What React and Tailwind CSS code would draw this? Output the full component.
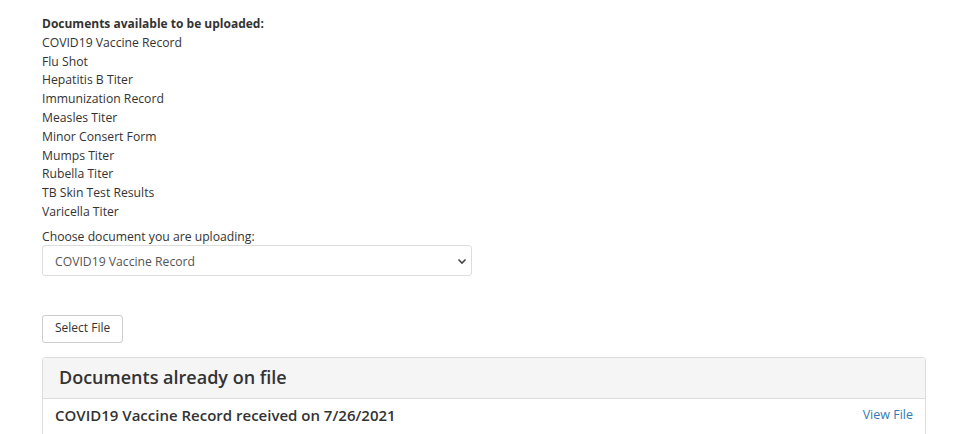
import React from "react";

const DOCS = [
  "COVID19 Vaccine Record",
  "Flu Shot",
  "Hepatitis B Titer",
  "Immunization Record",
  "Measles Titer",
  "Minor Consert Form",
  "Mumps Titer",
  "Rubella Titer",
  "TB Skin Test Results",
  "Varicella Titer",
];

export default function App() {
  return (
    <div
      className="min-h-screen bg-white pl-[42px] pt-[15px] text-[#333] text-[12.2px] leading-[18.8px]"
      style={{ fontFamily: '"Open Sans", "Noto Sans", sans-serif' }}
    >
      <div className="text-[12px] font-bold">Documents available to be uploaded:</div>
      {DOCS.map((d) => (
        <div key={d}>{d}</div>
      ))}

      <div className="mt-[6px]">Choose document you are uploading:</div>
      <div className="relative -mt-[2px] w-[430px]">
        <select
          className="h-[31px] w-full appearance-none rounded-[3px] border border-[#ddd] bg-white pl-[12px] pt-[4px] text-[12.2px] text-[#555] outline-none"
          defaultValue="COVID19 Vaccine Record"
        >
          {DOCS.map((d) => (
            <option key={d}>{d}</option>
          ))}
        </select>
        <svg
          className="pointer-events-none absolute right-[5px] top-[13px]"
          width="10"
          height="7"
          viewBox="0 0 10 7"
        >
          <path d="M1.5 1.5l3.5 3.5 3.5-3.5" fill="none" stroke="#444" strokeWidth="1.6" />
        </svg>
      </div>

      <button className="mt-[39px] h-[28px] rounded-[3px] border border-[#ccc] bg-white px-[12px] text-[12px] text-[#333]">
        Select File
      </button>

      <div className="mt-[14px] w-[884px] rounded-t-[3px] border border-[#ddd]">
        <div className="flex h-[41px] items-center border-b border-[#ddd] bg-[#f5f5f5] px-[16px] text-[18px] font-semibold text-[#333]">
          Documents already on file
        </div>
        <div className="flex items-center justify-between pl-[12px] pr-[12px] pt-[7px] pb-[10px]">
          <span className="text-[15px] font-semibold text-[#333]">
            COVID19 Vaccine Record received on 7/26/2021
          </span>
          <a href="#" className="text-[12.5px] text-[#337ab7]">
            View File
          </a>
        </div>
      </div>
    </div>
  );
}
